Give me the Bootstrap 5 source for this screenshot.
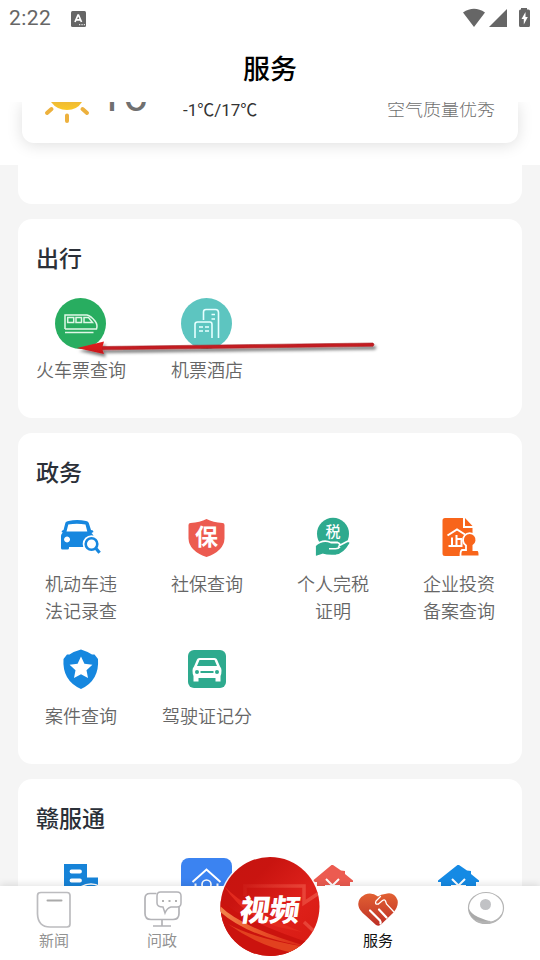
<!DOCTYPE html>
<html lang="zh-CN">
<head>
<meta charset="utf-8">
<meta name="viewport" content="width=device-width, initial-scale=1">
<title>服务</title>
<link href="https://cdn.jsdelivr.net/npm/bootstrap@5.3.0/dist/css/bootstrap.min.css" rel="stylesheet">
<style>
body{font-family:"Noto Sans CJK SC",sans-serif;background:#f5f5f5;color:#666}
svg{display:block;flex:none}
.app{width:540px;height:960px}
.statusbar{height:37px;padding:0 8px 0 9px}
.clock{font:400 21px/37px Roboto,sans-serif;color:#666;letter-spacing:.4px;width:62px}
.page-title{height:65px;line-height:62px;font-size:27px;font-weight:500;color:#000}
.feed{min-height:0}
.weather-wrap{height:63px;padding:0 22px}
.weather{height:41px;border-radius:0 0 12px 12px;box-shadow:0 2px 16px rgba(0,0,0,.13);padding-left:22px;padding-right:23px}
.digits{font:400 45px/45px Roboto,sans-serif;color:#707070;width:85px;margin-left:8px;margin-top:-29px;height:45px;letter-spacing:-.5px}
.range{font:400 17px/20px Roboto,"Noto Sans CJK SC",sans-serif;color:#333;margin-top:-2px}
.air{font-size:18px;line-height:20px;margin-top:-4px;color:#6f6f6f;font-weight:300}
.stub{height:39px;border-radius:0 0 14px 14px;margin:0 18px 15px}
.panel{border-radius:14px;margin:0 18px 15px;padding:22px 0 35px}
.panel h2{font-size:23px;line-height:32px;font-weight:500;color:#2b3038;margin:0 0 25px;padding-left:18px}
.grid-services{row-gap:20px}
.grid-icons svg,.svc svg{margin-right:1px}
.svc svg{margin-bottom:7px}
.svc span{font-size:18px;line-height:27px;font-weight:350;white-space:nowrap}
.tabs{height:74px;box-shadow:0 -2px 7px rgba(0,0,0,.10)}
.tab{width:108px;font-size:15px;color:#929292;line-height:20px}
.tab svg{margin-top:3px;margin-bottom:1px}
.tab.on{color:#111}
.video-btn{left:218px;top:-32px}
.pointer{left:70px;top:332px;pointer-events:none}
</style>
</head>
<body class="m-0 overflow-hidden">
<div class="app d-flex flex-column position-relative overflow-hidden">
  <header class="bg-white position-relative z-1 flex-shrink-0">
    <div class="statusbar d-flex align-items-center">
      <span class="clock">2:22</span>
      <svg width="15" height="16" viewBox="0 0 15 16"><rect width="15" height="16" rx="1.500" fill="#666"/><path d="M4 11 7 4h.5L10.500 11M5.300 8.800h4" fill="none" stroke="#fff" stroke-width="1.700"/><path d="M8 13.700h6" stroke="#fff" stroke-dasharray="1.300 1.100"/></svg>
      <svg class="ms-auto" width="70" height="22" viewBox="462 7 70 22" fill="#666"><path d="M463 11.500Q474 4 485 11.500L474 26ZM507 8V26H489ZM521 6.500h6v2h1.500q1.500 0 1.500 1.500V24.500Q530 26 528.500 26h-8Q519 26 519 24.500V10Q519 8.500 520.500 8.500H521Z"/><path d="M525.500 11 521.500 18h2.300v5.500l4-7.500h-2.300z" fill="#fff"/></svg>
    </div>
    <div class="page-title text-center">服务</div>
  </header>

  <main class="feed flex-fill overflow-hidden">
    <div class="weather-wrap bg-white">
      <div class="weather bg-white d-flex align-items-start">
        <svg width="46" height="24" viewBox="44 102 46 24"><defs><linearGradient id="sun" x2="0" y2="1"><stop stop-color="#efba35"/><stop offset="1" stop-color="#fbc928"/></linearGradient></defs><path d="M51 102H82Q77 110 67 110 57 110 51 102" fill="url(#sun)"/><path d="M51.500 109 47 113M82.500 109l4.500 4M67 115.500v5.500" stroke="#edb13d" stroke-width="4" stroke-linecap="round"/></svg>
        <div class="digits">16</div>
        <div class="range">-1℃/17℃</div>
        <div class="air ms-auto">空气质量优秀</div>
      </div>
    </div>
    <div class="stub bg-white"></div>

    <section class="panel bg-white">
      <h2>出行</h2>
      <div class="row g-0 grid-services text-center">
        <div class="col-3 svc d-flex flex-column align-items-center">
          <svg width="51" height="51" viewBox="0 0 51 51"><circle cx="25.500" cy="25.500" r="25.500" fill="#28ad60"/><g fill="none" stroke="#dff7e6" stroke-width="1.500"><path d="M10 31V17h22q4 1 8 6 3 4 1.500 8H10M10 34.500h28.500"/><path d="M12.700 19.500h6v5h-6zM21 19.500h5.500v5H21zM29 19.500h4.500l4 5H29z"/></g></svg>
          <span>火车票查询</span>
        </div>
        <div class="col-3 svc d-flex flex-column align-items-center">
          <svg width="51" height="51" viewBox="0 0 51 51"><circle cx="25.500" cy="25.500" r="25.500" fill="#5dc5c0"/><path d="M14 40V26.500q0-2.500 2.500-2.500H29q2 0 2 2.500V40M22.500 22V14q0-2.500 2.500-2.500h9.500q3 0 3 3V40M30.500 16.500h3.500M30.500 21h3.500M18 29h4M24 29h4M18 33h4M24 33h4" fill="none" stroke="#e7ffff" stroke-width="1.600"/></svg>
          <span>机票酒店</span>
        </div>
      </div>
    </section>

    <section class="panel bg-white">
      <h2>政务</h2>
      <div class="row g-0 grid-services text-center">
        <div class="col-3 svc d-flex flex-column align-items-center">
          <svg width="51" height="51" viewBox="1 0 51 51"><path fill="#1687df" fill-rule="evenodd" d="M11.500 10.500Q12.500 9 14.500 9 23 7 32 9q1.800 0 2.700 1.800L37 18q2.500 0 2.500 2l-2 1q2.500 2 2.500 5v10.500h-6V35H15V36q0 1.500-1.500 1.500h-5Q7 37.500 7 36V24q0-2 1.800-3.500L7.500 20q.5-2 2-2ZM14.300 12.500 12.500 19.500H33.300L31.500 12.500Q23 10.800 14.300 12.500M13 24.500a3 3 0 1 0 .1 0Z"/><circle cx="37.500" cy="32" r="8.800" fill="#fff"/><circle cx="37.500" cy="32" r="5.800" fill="none" stroke="#1687df" stroke-width="2.600"/><path d="m42 36.500 3.600 4.200" stroke="#1687df" stroke-width="3.200"/></svg>
          <span>机动车违<br>法记录查</span>
        </div>
        <div class="col-3 svc d-flex flex-column align-items-center">
          <svg width="51" height="51" viewBox="0 0 51 51"><path d="M25.500 7Q32 10.500 41.500 11 43.500 11 43.500 13V26.500Q43 39 25.500 45 8 39 7.500 26.500V13Q7.500 11 9.500 11 19 10.500 25.500 7" fill="#ec5b50"/><text x="25.500" y="33" text-anchor="middle" font-size="23" font-weight="700" fill="#fff">保</text></svg>
          <span>社保查询</span>
        </div>
        <div class="col-3 svc d-flex flex-column align-items-center">
          <svg width="51" height="51" viewBox="0 0 51 51"><circle cx="26" cy="21.700" r="16" fill="#2eaa8e"/><path d="M8 33.500q8-7 16-3h6.500q3 1 2 3l7.500-4q4-1 3 2.500-6 10.500-14 11.500-9 .5-13-1L8 45Z" fill="#2eaa8e" stroke="#fff" stroke-width="1.800"/><path d="M22 36.700h6.500q3 0 4.500-2" fill="none" stroke="#fff" stroke-width="1.500"/><text x="26" y="24.500" text-anchor="middle" font-size="15" font-weight="500" fill="#fff">税</text></svg>
          <span>个人完税<br>证明</span>
        </div>
        <div class="col-3 svc d-flex flex-column align-items-center">
          <svg width="51" height="51" viewBox="0 0 51 51"><path d="M12 6H30V16H39.500V44H12Q9.500 44 9.500 41.500V8.500Q9.500 6 12 6M32 6 39.500 14H32Z" fill="#f8651b"/><path d="M14.500 23.500 24 17.500l8 5M23.500 23v10M19 25.500v8M15.500 34h14M24 27h5M28.500 27v7" fill="none" stroke="#fff" stroke-width="2"/><path d="M33 33.500a6.700 6.700 0 1 1 7.400 0v4.500h4q2 0 2 5v1.500H27.500V43q0-5 2-5H33Z" fill="#f8651b" stroke="#fff" stroke-width="1.800"/></svg>
          <span>企业投资<br>备案查询</span>
        </div>
        <div class="col-3 svc d-flex flex-column align-items-center">
          <svg width="51" height="51" viewBox="0 0 51 51"><path d="M26 5.500Q31 7 37 10.500h2.500L43 15Q44.500 36.500 26 45 7 36.500 8.500 15L12 10.500h2.500Q20 7 26 5.500" fill="#1687df"/><path d="m26 12.500 3.400 7.300 8 1-5.900 5.400 1.500 7.800-7-3.800-7 3.800 1.500-7.800-5.900-5.400 8-1Z" fill="#fff"/></svg>
          <span>案件查询</span>
        </div>
        <div class="col-3 svc d-flex flex-column align-items-center">
          <svg width="51" height="51" viewBox="0 .5 51 51"><rect x="7" y="6.500" width="38" height="38" rx="6" fill="#2eaa8e"/><path fill="#fff" fill-rule="evenodd" d="M16 16Q16.500 14.500 18.500 14.500h15q2 0 2.500 1.500l3 7q1.500 1.500 1.500 4 0 4-1 5.500v5.500h-5v-3.500H17.500V38h-5v-5.500q-1-1.500-1-5.500 0-2.500 1.500-4ZM18.500 16.500l-2.500 6h20l-2.500-6ZM19.500 27.500v2h13v-2Z"/><circle cx="16" cy="28.500" r="2" fill="#2eaa8e"/><circle cx="36" cy="28.500" r="2" fill="#2eaa8e"/></svg>
          <span>驾驶证记分</span>
        </div>
      </div>
    </section>

    <section class="panel bg-white">
      <h2>赣服通</h2>
      <div class="row g-0 grid-icons">
        <div class="col-3 d-flex justify-content-center"><svg width="51" height="51" viewBox="0 0 51 51"><path d="M9 6H32V19.500H43V40H9Z" fill="#1683d8"/><path d="M16.500 13.500h8.500M16.500 22.500h8.500" stroke="#fff" stroke-width="3.800" stroke-linecap="round"/><path d="M25 29.500q5-3.500 11-3.500t10 3.500" fill="none" stroke="#fff" stroke-width="1.500"/></svg></div>
        <div class="col-3 d-flex justify-content-center"><svg width="51" height="51" viewBox="0 0 51 51"><rect width="51" height="51" rx="8" fill="#3b83f1"/><path d="m11.500 24 14-12.500 14 12.500M14.500 25.500V40h22V25.500" fill="none" stroke="#fff" stroke-width="2"/><circle cx="25.500" cy="26.500" r="4.500" fill="none" stroke="#fff" stroke-width="1.700"/></svg></div>
        <div class="col-3 d-flex justify-content-center"><svg width="51" height="51" viewBox="0 0 51 51"><path d="M26 7 34 12.500 38 13v3l8 6.500V24h-3v20H10V24H6v-1.500L24.500 7Z" fill="#ec5b50"/><path d="m19 21 6.500 6.500L32 21M18 28h15" fill="none" stroke="#fff" stroke-width="2"/></svg></div>
        <div class="col-3 d-flex justify-content-center"><svg width="51" height="51" viewBox="0 0 51 51"><path d="M26 7 34 12.500 38 13v3l8 6.500V24h-3v20H8V24H5v-1.500L24.500 7Z" fill="#158ae4"/><path d="m19 21 6.500 6.500L32 21M18 28h15" fill="none" stroke="#fff" stroke-width="2"/></svg></div>
      </div>
    </section>
  </main>

  <nav class="tabs bg-white d-flex flex-shrink-0 position-relative z-2">
    <div class="tab d-flex flex-column align-items-center"><svg width="40" height="40" viewBox="0 0 40 40"><path d="M7 3.500H33q3 0 3 3V35q0 3-3 3H16Q4 38 3.500 25V6.500q0-3 3.500-3" fill="none" stroke="#bcbcbf" stroke-width="1.700"/><path d="M13.500 11.500h14" stroke="#aaa" stroke-width="2" stroke-linecap="round"/></svg><span>新闻</span></div>
    <div class="tab d-flex flex-column align-items-center"><svg width="40" height="40" viewBox="0 0 40 40"><path d="M14.500 4.500H8Q3 4.500 3 9.500v15Q3 30.500 9 30.500h22q6 0 6-6V17M20 31v5.500M11 37h18" fill="none" stroke="#b3b3b7" stroke-width="1.700"/><path d="M18.500 3H35q4 0 4 4v7q0 4-4 4H29q-4 1-6 6l-2-6q-6 0-6-4V7q0-4 3.500-4Z" fill="#fff" stroke="#b3b3b7" stroke-width="1.500"/><path d="M20 12h2M26.500 12h2M33 12h2" stroke="#999" stroke-width="1.500"/></svg><span>问政</span></div>
    <div class="tab"></div>
    <div class="tab on d-flex flex-column align-items-center"><svg width="40" height="40" viewBox="0 0 40 40"><defs><linearGradient id="heart" x2="0" y2="1"><stop stop-color="#e26133"/><stop offset="1" stop-color="#bd2f25"/></linearGradient></defs><path d="M20 7.500Q14 3 7 5.500-1 10 .5 17 1 21 7 26L18 36q3 1.500 5-.5L35 24q6-7 4.500-13Q36 2 27 5q-4 0-7 2.500" fill="url(#heart)"/><path d="M12 21.500 22 31.500q1 1.500.500 3M21 20.500l7.500 8" fill="none" stroke="#fff" stroke-width="2.200" stroke-linecap="round"/><path d="M22.500 7.500 18 12q-1.500 4 2.500 3l4-3.500q2-1.500 3 .5l1 3 7 7.500" fill="none" stroke="#fff" stroke-width="1.300" stroke-linecap="round"/></svg><span>服务</span></div>
    <div class="tab d-flex flex-column align-items-center"><svg width="40" height="40" viewBox="0 0 40 40"><ellipse cx="20" cy="19" rx="17.500" ry="15.500" fill="#fff" stroke="#b5b5b5" stroke-width="1.200"/><path d="M2.500 19Q5 25 12 28t13 4.500q-5 3.500-12 .5Q3 29 2.500 19" fill="#aaa"/><path d="M10 31.500q6 3 14 1M23 33.500q9-1 13-8" fill="none" stroke="#b5b5b5" stroke-width="1.500"/><circle cx="19.500" cy="15.500" r="5.500" fill="#c1c2c5"/></svg></div>
    <svg class="video-btn position-absolute" width="104" height="104" viewBox="0 0 104 104">
      <defs>
        <linearGradient id="red" x2="1" y2="1"><stop stop-color="#c5140f"/><stop offset=".3" stop-color="#c91410"/><stop offset=".6" stop-color="#de211b"/><stop offset="1" stop-color="#d6190f"/></linearGradient>
        <linearGradient id="gold"><stop stop-color="#f28a50"/><stop offset=".35" stop-color="#ec5a2c"/><stop offset="1" stop-color="#d61b12"/></linearGradient>
        <linearGradient id="frame"><stop stop-color="#ef5a4a" stop-opacity=".15"/><stop offset="1" stop-color="#ef5a4a"/></linearGradient>
        <clipPath id="disc"><circle cx="52" cy="52.500" r="49.500"/></clipPath>
      </defs>
      <circle cx="52" cy="52.500" r="51" fill="#fff" opacity=".9"/>
      <g clip-path="url(#disc)">
        <path d="M0 0H104V104H0Z" fill="url(#red)"/>
        <path d="M0 45Q25 68 104 93V104H0Z" fill="#cb130e"/>
        <path d="M0 50Q22 74 95 94 30 84 0 56Z" fill="url(#gold)"/>
        <path d="M10 70Q35 84 88 93L76 99Q40 92 10 70Z" fill="#e2411f"/>
        <path d="M6 32Q30 57 84 78L60 73Q25 62 6 32" fill="#e22a1e"/>
        <path d="M27 42V32H86V49L104 37M86 68l14 13" fill="none" stroke="url(#frame)" stroke-width="3.500" opacity=".75"/>
      </g>
      <text x="50.500" y="67" text-anchor="middle" font-size="30" font-weight="900" fill="#fff" transform="translate(9.500 0) skewX(-8)">视频</text>
    </svg>
  </nav>

  <svg class="pointer position-absolute z-1" width="315" height="32" viewBox="70 332 315 32"><defs><filter id="soft" x="-5%" y="-60%" width="110%" height="240%"><feDropShadow dx="2" dy="3" stdDeviation="1.800" flood-opacity=".5"/></filter><linearGradient id="tip" x2="0" y2="1"><stop stop-color="#e22020"/><stop offset="1" stop-color="#c71719"/></linearGradient></defs><g filter="url(#soft)"><path d="M102 346.500 373 343q2 1.500 0 3.300L102 349.800Z" fill="#c41c20" stroke="#a92126" stroke-width=".6"/><path d="M77 348 104 341.500 102 348.500 104 354Z" fill="url(#tip)"/></g></svg>
</div>
<script src="https://cdn.jsdelivr.net/npm/bootstrap@5.3.0/dist/js/bootstrap.bundle.min.js"></script>
</body>
</html>
